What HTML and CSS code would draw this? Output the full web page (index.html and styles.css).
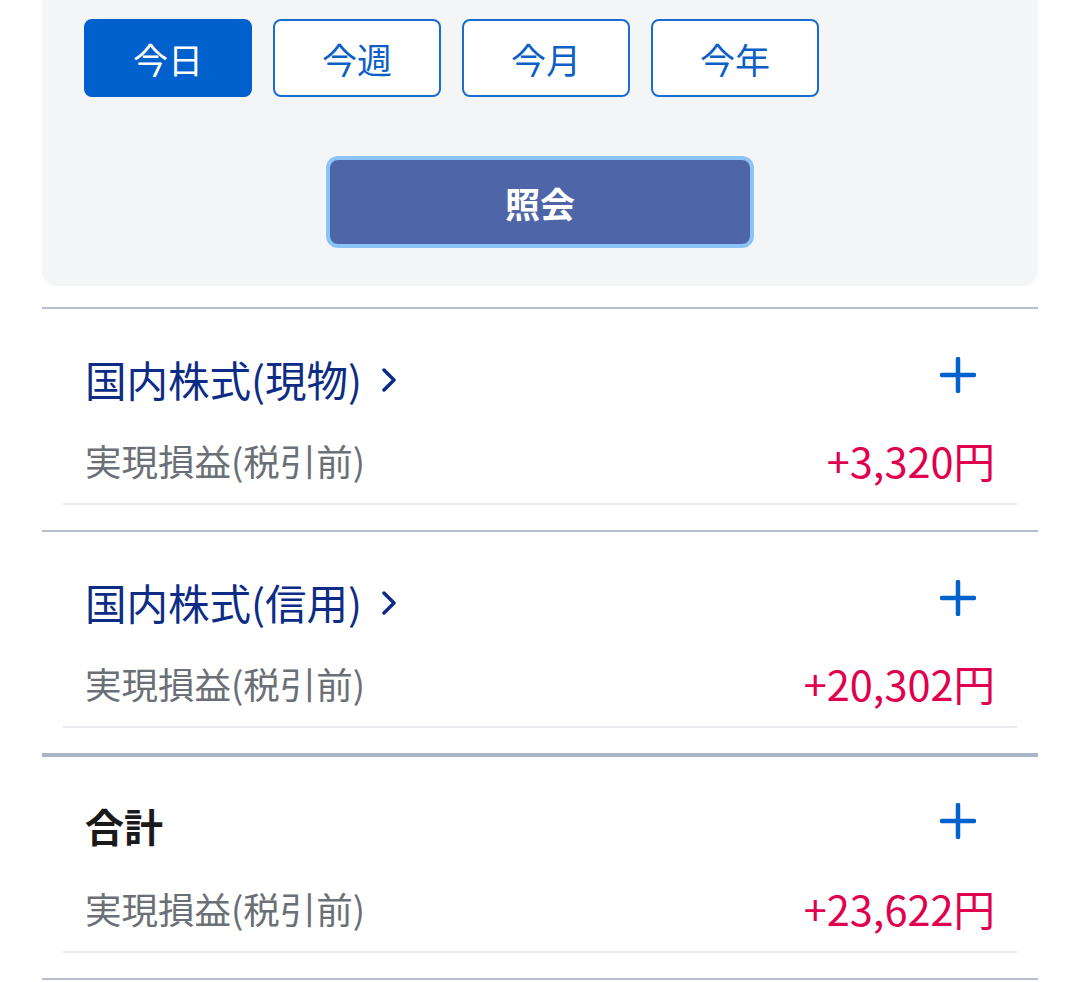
FILE: index.html
```html
<!DOCTYPE html>
<html lang="ja">
<head>
    <meta charset="UTF-8">
    <meta name="viewport" content="width=device-width, initial-scale=1.0">
    <title>実現損益</title>
    <link rel="stylesheet" href="styles.css">
</head>
<body>
    <div class="page">
        <!-- Search panel -->
        <div class="search-panel">
            <div class="period-tabs">
                <button class="period-btn active">今日</button>
                <button class="period-btn">今週</button>
                <button class="period-btn">今月</button>
                <button class="period-btn">今年</button>
            </div>
            <div class="query-row">
                <button class="query-btn">照会</button>
            </div>
        </div>

        <!-- Results -->
        <div class="result-list">
            <section class="result-section">
                <div class="result-inner">
                    <div class="result-head">
                        <a class="result-title link">国内株式(現物)
                            <svg class="chevron" width="14" height="24" viewBox="0 0 14 24"><polyline points="2,2 12,12 2,22" fill="none" stroke="currentColor" stroke-width="3.5" stroke-linecap="round" stroke-linejoin="round"/></svg>
                        </a>
                        <svg class="plus" width="36" height="36" viewBox="0 0 36 36"><path d="M18 2v32M2 18h32" stroke="currentColor" stroke-width="4.5" stroke-linecap="round"/></svg>
                    </div>
                    <div class="result-row">
                        <span class="label">実現損益(税引前)</span>
                        <span class="amount plus-value">+3,320円</span>
                    </div>
                </div>
            </section>

            <section class="result-section">
                <div class="result-inner">
                    <div class="result-head">
                        <a class="result-title link">国内株式(信用)
                            <svg class="chevron" width="14" height="24" viewBox="0 0 14 24"><polyline points="2,2 12,12 2,22" fill="none" stroke="currentColor" stroke-width="3.5" stroke-linecap="round" stroke-linejoin="round"/></svg>
                        </a>
                        <svg class="plus" width="36" height="36" viewBox="0 0 36 36"><path d="M18 2v32M2 18h32" stroke="currentColor" stroke-width="4.5" stroke-linecap="round"/></svg>
                    </div>
                    <div class="result-row">
                        <span class="label">実現損益(税引前)</span>
                        <span class="amount plus-value">+20,302円</span>
                    </div>
                </div>
            </section>

            <section class="result-section total">
                <div class="result-inner">
                    <div class="result-head">
                        <span class="result-title">合計</span>
                        <svg class="plus" width="36" height="36" viewBox="0 0 36 36"><path d="M18 2v32M2 18h32" stroke="currentColor" stroke-width="4.5" stroke-linecap="round"/></svg>
                    </div>
                    <div class="result-row">
                        <span class="label">実現損益(税引前)</span>
                        <span class="amount plus-value">+23,622円</span>
                    </div>
                </div>
            </section>
        </div>
    </div>
</body>
</html>
```

FILE: styles.css
```css
* {
    margin: 0;
    padding: 0;
    box-sizing: border-box;
}

body {
    font-family: "Noto Sans CJK JP", "Noto Sans", sans-serif;
    background: #ffffff;
    color: #1a1a1a;
}

.page {
    padding: 0 42px;
}

/* Search panel */
.search-panel {
    background: #f4f5f7;
    border-radius: 0 0 16px 16px;
    padding: 19px 42px 38px;
}

.period-tabs {
    display: flex;
    gap: 21px;
}

.period-btn {
    width: 168px;
    height: 78px;
    border: 2px solid #1a6dd0;
    border-radius: 8px;
    background: #ffffff;
    color: #0b5fc6;
    font-family: inherit;
    font-size: 35px;
    line-height: 1;
}

.period-btn.active {
    background: #0060cc;
    border-color: #0060cc;
    color: #ffffff;
}

.query-row {
    display: flex;
    justify-content: center;
    margin-top: 59px;
}

.query-btn {
    width: 428px;
    height: 92px;
    border: 4px solid #8cc3f6;
    border-radius: 12px;
    background: #4e66a8;
    color: #ffffff;
    font-family: inherit;
    font-size: 35px;
    font-weight: 700;
}

/* Result list */
.result-list {
    margin-top: 21px;
}

.result-section {
    border-top: 2px solid #b6bece;
    padding: 0 21px 25px;
}

.result-section.total {
    border-top: 4px solid #a9b4c6;
}

.result-section:last-child {
    border-bottom: 2px solid #b6bece;
}

.result-inner {
    border-bottom: 2px solid #e8eaee;
    padding: 40px 22px 18px;
}

.total .result-inner {
    padding-top: 38px;
}

.result-head {
    display: flex;
    align-items: center;
    justify-content: space-between;
    height: 60px;
}

.result-title {
    display: flex;
    align-items: center;
    gap: 20px;
    font-size: 41.5px;
    color: #0d2c86;
    text-decoration: none;
}

.total .result-title {
    color: #1a1a1a;
    font-weight: 700;
    font-size: 39px;
}

.chevron {
    color: #0d2c86;
    margin-top: 2px;
}

.plus {
    color: #0062cc;
    margin-right: 19px;
    margin-top: -8px;
}

.result-row {
    display: flex;
    align-items: center;
    justify-content: space-between;
    height: 50px;
    margin-top: 26px;
}

.total .result-row {
    margin-top: 28px;
}

.label {
    font-size: 36.5px;
    color: #6b6f76;
}

.amount {
    font-size: 41.5px;
}

.plus-value {
    color: #e0004e;
}
```
